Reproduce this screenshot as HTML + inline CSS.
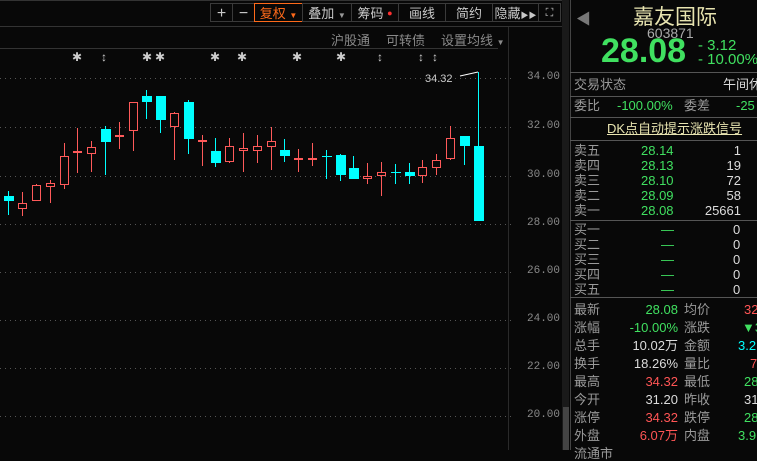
<!DOCTYPE html><html><head><meta charset="utf-8"><style>
body{margin:0;width:757px;height:450px;background:#080808;overflow:hidden;position:relative;font-family:"Liberation Sans","Noto Sans CJK SC",sans-serif;}
.a{position:absolute;white-space:nowrap;}
.btn{position:absolute;top:3px;height:19px;border:1px solid #3a3a3a;color:#c8c8c8;font-size:13px;line-height:19px;text-align:center;box-sizing:border-box;white-space:nowrap;}
.ax{position:absolute;left:527px;color:#8a8a8a;font-size:11px;font-family:"Liberation Mono",monospace;}
.r{position:absolute;font-size:13px;line-height:15px;white-space:nowrap;}
.g{color:#40e060}.rd{color:#ff5555}.w{color:#dcdcdc}.gr{color:#9a9a9a}.cy{color:#00ffff}
.hl{position:absolute;left:570px;width:187px;height:1px;background:#555;}
</style></head><body>
<div class="a" style="left:0;top:0;width:563px;height:1px;background:#333"></div>
<div class="a" style="left:0;top:26px;width:563px;height:1px;background:#333"></div>
<div class="a" style="left:0;top:48px;width:498px;height:1px;background:#333"></div>
<div class="btn" style="left:210px;width:23px;font-size:16px">+</div>
<div class="btn" style="left:232px;width:23px;font-size:16px">−</div>
<div class="btn" style="left:254px;width:49px;border-color:#ff6a1a;color:#ff6a1a">复权 <span style="font-size:8px">▼</span></div>
<div class="btn" style="left:302px;width:50px">叠加 <span style="font-size:8px;color:#999">▼</span></div>
<div class="btn" style="left:351px;width:48px">筹码 <span style="color:#ff3030;font-size:9px;vertical-align:top">●</span></div>
<div class="btn" style="left:398px;width:48px">画线</div>
<div class="btn" style="left:445px;width:48px">简约</div>
<div class="btn" style="left:492px;width:47px">隐藏<span style="font-size:8px">▶▶</span></div>
<div class="btn" style="left:538px;width:23px;font-size:11px">⛶</div>
<div class="a" style="left:331px;top:30px;color:#8a8a8a;font-size:13px">沪股通</div>
<div class="a" style="left:386px;top:30px;color:#8a8a8a;font-size:13px">可转债</div>
<div class="a" style="left:441px;top:30px;color:#8a8a8a;font-size:13px">设置均线 <span style="font-size:8px">▼</span></div>
<div class="a" style="left:508px;top:27px;width:1px;height:423px;background:#2a2a2a"></div>
<div class="a" style="left:562px;top:0;width:7px;height:450px;background:#1a1a1a"></div>
<div class="a" style="left:563px;top:407px;width:6px;height:43px;background:#444"></div>
<div class="ax" style="top:71px">34.00</div><div class="ax" style="top:120px">32.00</div><div class="ax" style="top:169px">30.00</div><div class="ax" style="top:217px">28.00</div><div class="ax" style="top:265px">26.00</div><div class="ax" style="top:313px">24.00</div><div class="ax" style="top:361px">22.00</div><div class="ax" style="top:409px">20.00</div>
<svg class="a" style="left:0;top:0" width="520" height="450">
<g stroke="#555" stroke-dasharray="1,4">
<line x1="0" y1="78.5" x2="512" y2="78.5"/><line x1="0" y1="127.5" x2="512" y2="127.5"/><line x1="0" y1="176.5" x2="512" y2="176.5"/><line x1="0" y1="224.5" x2="512" y2="224.5"/><line x1="0" y1="272.5" x2="512" y2="272.5"/><line x1="0" y1="320.5" x2="512" y2="320.5"/><line x1="0" y1="368.5" x2="512" y2="368.5"/><line x1="0" y1="416.5" x2="512" y2="416.5"/></g>
<g fill="#ccc" font-size="12" font-family="Liberation Sans">
<text x="72" y="61">✱</text><text x="101" y="61">↕</text><text x="142" y="61">✱</text><text x="155" y="61">✱</text><text x="210" y="61">✱</text><text x="237" y="61">✱</text><text x="292" y="61">✱</text><text x="336" y="61">✱</text><text x="377" y="61">↕</text><text x="418" y="61">↕</text><text x="432" y="61">↕</text>
<text x="425" y="82" font-size="11">34.32</text></g>
<line x1="460" y1="76" x2="478" y2="72" stroke="#fff"/>
<g id="c"></g>
</svg>
<script>
var d=[['c',8,196,201,191,215],['r',22,203,209,192,216],['r',36,185,201,184,201],['r',50,183,187,180,203],['r',64,156,185,143,189],['r',77,151,153,128,173],['r',91,147,154,141,172],['c',105,129,142,126,175],['r',119,135,136,122,149],['r',133,102,131,102,151],['c',146,96,102,90,119],['c',160,96,120,96,133],['r',174,113,127,112,160],['c',188,102,139,100,154],['r',202,140,142,135,166],['c',215,151,163,138,167],['r',229,146,162,138,163],['r',243,148,151,133,172],['r',257,146,151,135,163],['r',271,141,147,127,170],['c',284,150,156,139,162],['r',298,158,160,149,172],['r',312,158,159,143,166],['c',326,156,157,150,179],['c',340,155,175,154,181],['c',353,168,179,156,179],['r',367,176,179,163,184],['r',381,172,176,162,196],['c',395,172,173,164,184],['c',409,172,176,163,184],['r',422,167,176,160,183],['r',436,160,168,154,175],['r',450,138,159,126,160],['c',464,136,146,136,165],['c',478,146,221,72,221]];
var s='';d.forEach(function(k){var col=k[0]=='c'?'#00ffff':'#ff5a5a';var x=k[1];
s+='<line x1="'+(x+.5)+'" y1="'+k[4]+'" x2="'+(x+.5)+'" y2="'+k[5]+'" stroke="'+col+'"/>';
var h=Math.max(k[3]-k[2],1);
if(k[0]=='c')s+='<rect x="'+(x-4)+'" y="'+k[2]+'" width="10" height="'+h+'" fill="'+col+'"/>';
else s+='<rect x="'+(x-3.5)+'" y="'+(k[2]+.5)+'" width="8" height="'+Math.max(h-1,1)+'" fill="#080808" stroke="'+col+'"/>';});
document.getElementById('c').innerHTML=s;
</script>
<div class="a" style="left:570px;top:0;width:1px;height:450px;background:#444"></div>
<div class="a" style="left:576px;top:8px;color:#777;font-size:15px">◀</div>
<div class="a" style="left:633px;top:1px;color:#e8e4b0;font-size:21px">嘉友国际</div>
<div class="a" style="left:647px;top:25px;color:#aaa;font-size:14px">603871</div>
<div class="a g" style="left:601px;top:32px;font-size:34px;font-weight:bold">28.08</div>
<div class="a g" style="left:698px;top:37px;font-size:15px">- 3.12</div>
<div class="a g" style="left:698px;top:51px;font-size:15px">- 10.00%</div>
<div class="hl" style="top:72px"></div>
<div class="r gr" style="left:574px;top:77px">交易状态</div><div class="r w" style="left:723px;top:77px">午间休</div>
<div class="hl" style="top:96px"></div>
<div class="r gr" style="left:574px;top:98px">委比</div><div class="r g" style="left:617px;top:98px">-100.00%</div><div class="r gr" style="left:684px;top:98px">委差</div><div class="r g" style="left:736px;top:98px">-25</div>
<div class="hl" style="top:117px"></div>
<div class="r" style="left:607px;top:121px;color:#e8e4b0;text-decoration:underline">DK点自动提示涨跌信号</div>
<div class="hl" style="top:140px"></div>
<div class="r gr" style="left:574px;top:143px">卖五</div><div class="r g" style="left:641px;top:143px">28.14</div><div class="r w" style="left:700px;width:41px;text-align:right;top:143px">1</div>
<div class="r gr" style="left:574px;top:158px">卖四</div><div class="r g" style="left:641px;top:158px">28.13</div><div class="r w" style="left:700px;width:41px;text-align:right;top:158px">19</div>
<div class="r gr" style="left:574px;top:173px">卖三</div><div class="r g" style="left:641px;top:173px">28.10</div><div class="r w" style="left:700px;width:41px;text-align:right;top:173px">72</div>
<div class="r gr" style="left:574px;top:188px">卖二</div><div class="r g" style="left:641px;top:188px">28.09</div><div class="r w" style="left:700px;width:41px;text-align:right;top:188px">58</div>
<div class="r gr" style="left:574px;top:203px">卖一</div><div class="r g" style="left:641px;top:203px">28.08</div><div class="r w" style="left:700px;width:41px;text-align:right;top:203px">25661</div>
<div class="hl" style="top:220px"></div>
<div class="r gr" style="left:574px;top:222px">买一</div><div class="r g" style="left:661px;top:222px">—</div><div class="r w" style="left:733px;top:222px">0</div>
<div class="r gr" style="left:574px;top:237px">买二</div><div class="r g" style="left:661px;top:237px">—</div><div class="r w" style="left:733px;top:237px">0</div>
<div class="r gr" style="left:574px;top:252px">买三</div><div class="r g" style="left:661px;top:252px">—</div><div class="r w" style="left:733px;top:252px">0</div>
<div class="r gr" style="left:574px;top:267px">买四</div><div class="r g" style="left:661px;top:267px">—</div><div class="r w" style="left:733px;top:267px">0</div>
<div class="r gr" style="left:574px;top:282px">买五</div><div class="r g" style="left:661px;top:282px">—</div><div class="r w" style="left:733px;top:282px">0</div>
<div class="hl" style="top:297px"></div>
<div class="r gr" style="left:574px;top:302px">最新</div><div class="r g" style="left:600px;width:78px;text-align:right;top:302px">28.08</div><div class="r gr" style="left:684px;top:302px">均价</div><div class="r rd" style="left:744px;top:302px">32</div>
<div class="r gr" style="left:574px;top:320px">涨幅</div><div class="r g" style="left:600px;width:78px;text-align:right;top:320px">-10.00%</div><div class="r gr" style="left:684px;top:320px">涨跌</div><div class="r g" style="left:742px;top:320px">▼3</div>
<div class="r gr" style="left:574px;top:338px">总手</div><div class="r w" style="left:600px;width:78px;text-align:right;top:338px">10.02万</div><div class="r gr" style="left:684px;top:338px">金额</div><div class="r cy" style="left:738px;top:338px">3.2</div>
<div class="r gr" style="left:574px;top:356px">换手</div><div class="r w" style="left:600px;width:78px;text-align:right;top:356px">18.26%</div><div class="r gr" style="left:684px;top:356px">量比</div><div class="r rd" style="left:750px;top:356px">7</div>
<div class="r gr" style="left:574px;top:374px">最高</div><div class="r rd" style="left:600px;width:78px;text-align:right;top:374px">34.32</div><div class="r gr" style="left:684px;top:374px">最低</div><div class="r g" style="left:744px;top:374px">28</div>
<div class="r gr" style="left:574px;top:392px">今开</div><div class="r w" style="left:600px;width:78px;text-align:right;top:392px">31.20</div><div class="r gr" style="left:684px;top:392px">昨收</div><div class="r w" style="left:744px;top:392px">31</div>
<div class="r gr" style="left:574px;top:410px">涨停</div><div class="r rd" style="left:600px;width:78px;text-align:right;top:410px">34.32</div><div class="r gr" style="left:684px;top:410px">跌停</div><div class="r g" style="left:744px;top:410px">28</div>
<div class="r gr" style="left:574px;top:428px">外盘</div><div class="r rd" style="left:600px;width:78px;text-align:right;top:428px">6.07万</div><div class="r gr" style="left:684px;top:428px">内盘</div><div class="r g" style="left:738px;top:428px">3.9</div>
<div class="r gr" style="left:574px;top:446px">流通市</div>
</body></html>
